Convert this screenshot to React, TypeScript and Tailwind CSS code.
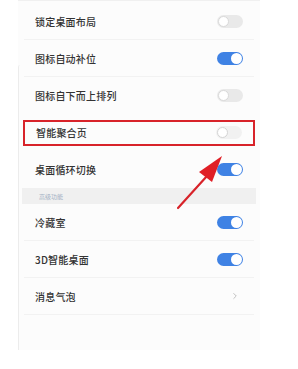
import { ChevronRight } from "lucide-react";

type Row = { label: string; kind: "on" | "off" | "fade" | "chevron"; boxed?: boolean };

const topRows: Row[] = [
    { label: "锁定桌面布局", kind: "off" },
    { label: "图标自动补位", kind: "on" },
    { label: "图标自下而上排列", kind: "off" },
    { label: "智能聚合页", kind: "fade", boxed: true },
    { label: "桌面循环切换", kind: "on" },
];

const bottomRows: Row[] = [
    { label: "冷藏室", kind: "on" },
    { label: "3D智能桌面", kind: "on" },
    { label: "消息气泡", kind: "chevron" },
];

function Toggle({ kind }: { kind: Row["kind"] }) {
    if (kind === "chevron") {
        return <ChevronRight className="w-[10px] h-[10px] mr-[3px] text-[#b5b5b5]" strokeWidth={2} />;
    }
    if (kind === "on") {
        return (
            <div className="w-[26px] h-[13px] rounded-full bg-[#3f82e4] flex items-center justify-end pr-[1px]">
                <div className="w-[11px] h-[11px] rounded-full bg-white" />
            </div>
        );
    }
    if (kind === "fade") {
        return (
            <div className="w-[26px] h-[13px] rounded-full bg-[#f1f1f1] flex items-center pl-[1px]">
                <div className="w-[11px] h-[11px] rounded-full bg-white border border-[#d4d4d4]" />
            </div>
        );
    }
    return (
        <div className="w-[26px] h-[13px] rounded-full bg-[#e9e9e9] flex items-center pl-[1px]">
            <div className="w-[11px] h-[11px] rounded-full bg-white border border-[#d9d9d9]" />
        </div>
    );
}

function SettingRow({ row, divider }: { row: Row; divider?: boolean }) {
    return (
        <div className={`h-[37px] flex items-center mx-[6px] ${divider ? "border-b border-[#f2f2f2]" : ""}`}>
            <div
                className={`flex-1 flex items-center justify-between pl-[11px] pr-[11px] ${
                    row.boxed ? "border-2 border-[#d8232a] h-[26px] -mx-[1px]" : "h-full"
                }`}
            >
                <span className="text-[10px] font-medium text-[#333] tracking-[0.2px]">{row.label}</span>
                <Toggle kind={row.kind} />
            </div>
        </div>
    );
}

export default function App() {
    return (
        <div
            className="w-[298px] h-[369px] bg-white relative overflow-hidden"
            style={{ fontFamily: '"Noto Sans CJK SC", "Noto Sans", sans-serif' }}
        >
            <div className="ml-[18px] w-[242px] h-[350px] bg-[#fcfcfc] border-t border-[#f0f0f0] pt-[2px] flex">
                <div className="w-[2px] mt-[62px] border-l border-[#ececec] rounded-tl-[6px]" />
                <div className="flex-1 -ml-[2px]">
                    {topRows.map((r, i) => (
                        <SettingRow key={r.label} row={r} divider={i < 2} />
                    ))}
                    <div className="h-[16px] bg-[#f0f0f0] flex items-center pl-[17px] mx-[4px]">
                        <span className="text-[6px] text-[#a3b0c4]">高级功能</span>
                    </div>
                    {bottomRows.map((r) => (
                        <SettingRow key={r.label} row={r} divider />
                    ))}
                </div>
            </div>

            <svg className="absolute left-0 top-0" width="298" height="369" viewBox="0 0 298 369">
                <line x1="178" y1="208" x2="207" y2="176" stroke="#d8232a" strokeWidth="2.2" strokeLinecap="round" />
                <polygon points="222,156 199,172 212,182" fill="#e01f26" />
            </svg>
        </div>
    );
}
